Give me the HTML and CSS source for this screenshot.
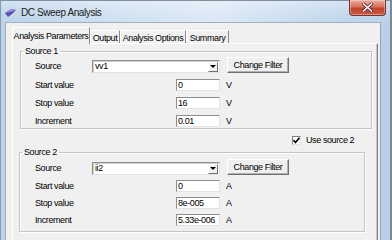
FILE: index.html
```html
<!DOCTYPE html>
<html>
<head>
<meta charset="utf-8">
<title>DC Sweep Analysis</title>
<link rel="stylesheet" href="styles.css">
</head>
<body>
<div class="window">
  <div class="titlebar">
    <svg class="app-icon" width="11" height="8" viewBox="0 0 11 8">
      <polygon points="0,4 6,0 11,1 7,5 3,8" fill="#5a4fb0"/>
      <polygon points="0,4 6,0 11,1 5,3" fill="#9c94e0"/>
    </svg>
    <span class="title">DC Sweep Analysis</span>
    <div class="close">
      <svg width="11" height="9" viewBox="0 0 11 9">
        <path d="M1.5 1 L9.5 8 M9.5 1 L1.5 8" stroke="#4a1f1f" stroke-width="3" stroke-linecap="square"/>
        <path d="M1.5 1 L9.5 8 M9.5 1 L1.5 8" stroke="#ffffff" stroke-width="1.6" stroke-linecap="square"/>
      </svg>
    </div>
  </div>
  <div class="frame-body">
    <div class="client">
      <div class="tabs">
        <div class="tab tab-active tab-w1">Analysis Parameters</div>
        <div class="tab tab-w2">Output</div>
        <div class="tab tab-w3">Analysis Options</div>
        <div class="tab tab-w4">Summary</div>
      </div>
      <div class="panel">
        <fieldset class="group group-1">
          <legend>Source 1</legend>
          <div class="form form-1">
            <span class="lbl lbl-top">Source</span>
            <div class="combo"><span class="combo-text">vv1</span><span class="drop"><span class="arrow"></span></span></div>
            <div class="btn">Change Filter</div>

            <span class="lbl">Start value</span>
            <div class="input">0</div>
            <span class="unit">V</span>

            <span class="lbl">Stop value</span>
            <div class="input">16</div>
            <span class="unit">V</span>

            <span class="lbl">Increment</span>
            <div class="input">0.01</div>
            <span class="unit">V</span>
          </div>
        </fieldset>

        <div class="check-row">
          <span class="checkbox">
            <svg width="7" height="7" viewBox="0 0 7 7"><path d="M0.5 3 L2.5 5.5 L6.5 0.8" stroke="#000" stroke-width="1.6" fill="none"/></svg>
          </span>
          <span class="check-label">Use source 2</span>
        </div>

        <fieldset class="group group-2">
          <legend>Source 2</legend>
          <div class="form form-2">
            <span class="lbl lbl-top">Source</span>
            <div class="combo"><span class="combo-text">ii2</span><span class="drop"><span class="arrow"></span></span></div>
            <div class="btn">Change Filter</div>

            <span class="lbl">Start value</span>
            <div class="input">0</div>
            <span class="unit">A</span>

            <span class="lbl">Stop value</span>
            <div class="input">8e-005</div>
            <span class="unit">A</span>

            <span class="lbl">Increment</span>
            <div class="input">5.33e-006</div>
            <span class="unit">A</span>
          </div>
        </fieldset>
      </div>
    </div>
  </div>
</div>
</body>
</html>
```

FILE: styles.css
```css
* { box-sizing: border-box; }
html, body {
  margin: 0;
  padding: 0;
  width: 392px;
  height: 240px;
  overflow: hidden;
  background: #6b7b8c;
}
body {
  font-family: "Liberation Sans", Arial, sans-serif;
  font-size: 9px;
  letter-spacing: -0.4px;
  color: #000;
}
.window {
  width: 392px;
  height: 240px;
  display: flex;
  flex-direction: column;
  background: linear-gradient(90deg, #bcd3ea 0%, #cfe0f1 30%, #dbe8f5 55%, #c6daee 80%, #b9d0e8 100%);
  border-left: 1px solid #8a9bb0;
  border-right: 2px solid #7f8790;
  border-top: 1px solid #7d8fa3;
}
.titlebar {
  height: 21px;
  flex: none;
  display: flex;
  align-items: center;
  padding-left: 4px;
  background: linear-gradient(180deg, rgba(255,255,255,0.35) 0%, rgba(255,255,255,0.1) 60%, rgba(255,255,255,0) 100%);
}
.app-icon { flex: none; margin-top: 2px; }
.title {
  margin-left: 5px;
  font-size: 10px;
  letter-spacing: -0.4px;
  color: #1a1a1a;
  margin-top: 1px;
}
.close {
  margin-left: auto;
  margin-right: 4px;
  align-self: flex-start;
  margin-top: -1px;
  width: 37px;
  height: 16px;
  border: 1px solid #7a3030;
  border-top: none;
  border-radius: 0 0 4px 4px;
  background: linear-gradient(180deg, #e9a99a 0%, #d9725f 45%, #c2422c 55%, #c85a43 100%);
  box-shadow: inset 0 0 0 1px rgba(255,255,255,0.35);
  display: flex;
  align-items: center;
  justify-content: center;
}
.frame-body {
  flex: 1;
  padding-left: 4px;
  padding-right: 9px;
  display: flex;
}
.client {
  flex: 1;
  background: #f0f0f0;
  border-left: 1px solid #a3b0bf;
  border-top: 1px solid #a3b0bf;
  border-right: 1px solid #9aa3ad;
  padding: 4px 2px 0 6px;
  display: flex;
  flex-direction: column;
}
.tabs {
  display: flex;
  height: 16px;
  align-items: flex-end;
  position: relative;
  z-index: 1;
}
.tab {
  height: 13px;
  line-height: 12px;
  text-align: center;
  border-top: 1px solid #ffffff;
  border-left: 1px solid #ffffff;
  border-right: 1px solid #8a8a8a;
  white-space: nowrap;
  padding-top: 1px;
}
.tab-active {
  height: 17px;
  margin-bottom: -1px;
  background: #f0f0f0;
  padding-top: 2px;
}
.tab-w1 { width: 78px; }
.tab-w2 { width: 30px; }
.tab-w3 { width: 66px; }
.tab-w4 { width: 43px; }
.panel {
  flex: 1;
  border-top: 1px solid #ffffff;
  border-left: 1px solid #ffffff;
  border-right: 1px solid #808080;
  box-shadow: inset -1px 0 0 #c8c8c8;
  padding: 1px 0 0 0;
  display: flex;
  flex-direction: column;
}
.group {
  margin: 0;
  padding: 0;
  border: 1px solid #c4c4c4;
  box-shadow: inset 1px 1px 0 #fff, 1px 1px 0 #fff;
  min-width: 0;
}
.group legend {
  padding: 0 2px;
  margin-left: -12px;
  line-height: 12px;
  height: 12px;
}
.group-1 {
  margin-left: 7px;
  width: 352px;
  padding: 0 0 1px 14px;
}
.group-2 {
  margin-left: 6px;
  width: 346px;
  padding: 1px 0 5px 15px;
}
.group-2 legend { margin-left: -13px; }
.form {
  display: grid;
  grid-template-columns: 57px 84px 44px auto;
  grid-template-rows: 16px 12px 12px 12px;
  align-items: center;
}
.form-1 { row-gap: 6px; }
.form-2 { row-gap: 5px; }
.lbl { white-space: nowrap; line-height: 12px; }
.lbl-top { align-self: end; line-height: 13px; }
.combo {
  grid-column: 2 / span 2;
  align-self: end;
  height: 13px;
  background: #fff;
  border-top: 1px solid #8d8d8d;
  border-left: 1px solid #8d8d8d;
  border-right: 1px solid #e3e3e3;
  border-bottom: 1px solid #e3e3e3;
  box-shadow: inset 1px 1px 0 #d0d0d0;
  display: flex;
  align-items: center;
  padding-left: 2px;
}
.combo-text { flex: 1; line-height: 11px; }
.drop {
  width: 10px;
  height: 10px;
  margin-right: 1px;
  background: #f0f0f0;
  border-top: 1px solid #fff;
  border-left: 1px solid #fff;
  border-right: 1px solid #707070;
  border-bottom: 1px solid #707070;
  display: flex;
  align-items: center;
  justify-content: center;
}
.arrow {
  width: 0;
  height: 0;
  border-left: 3px solid transparent;
  border-right: 3px solid transparent;
  border-top: 3px solid #000;
}
.btn {
  margin-left: 7px;
  width: 62px;
  height: 16px;
  line-height: 14px;
  text-align: center;
  background: #efefef;
  border-top: 1px solid #ffffff;
  border-left: 1px solid #ffffff;
  border-right: 1px solid #6f6f6f;
  border-bottom: 1px solid #6f6f6f;
  box-shadow: inset -1px -1px 0 #b0b0b0;
  white-space: nowrap;
}
.input {
  grid-column: 3;
  height: 12px;
  line-height: 10px;
  background: #fff;
  border-top: 1px solid #8d8d8d;
  border-left: 1px solid #8d8d8d;
  border-right: 1px solid #e3e3e3;
  border-bottom: 1px solid #e3e3e3;
  padding-left: 1px;
  white-space: nowrap;
  overflow: hidden;
}
.unit { margin-left: 6px; line-height: 12px; }
.check-row {
  display: flex;
  align-items: center;
  height: 12px;
  margin-top: 5px;
  margin-bottom: 0;
  padding-left: 279px;
}
.checkbox {
  width: 9px;
  height: 9px;
  background: #fff;
  border-top: 1px solid #808080;
  border-left: 1px solid #808080;
  border-right: 1px solid #e3e3e3;
  border-bottom: 1px solid #e3e3e3;
  display: flex;
  align-items: center;
  justify-content: center;
}
.check-label { margin-left: 5px; white-space: nowrap; }
```
